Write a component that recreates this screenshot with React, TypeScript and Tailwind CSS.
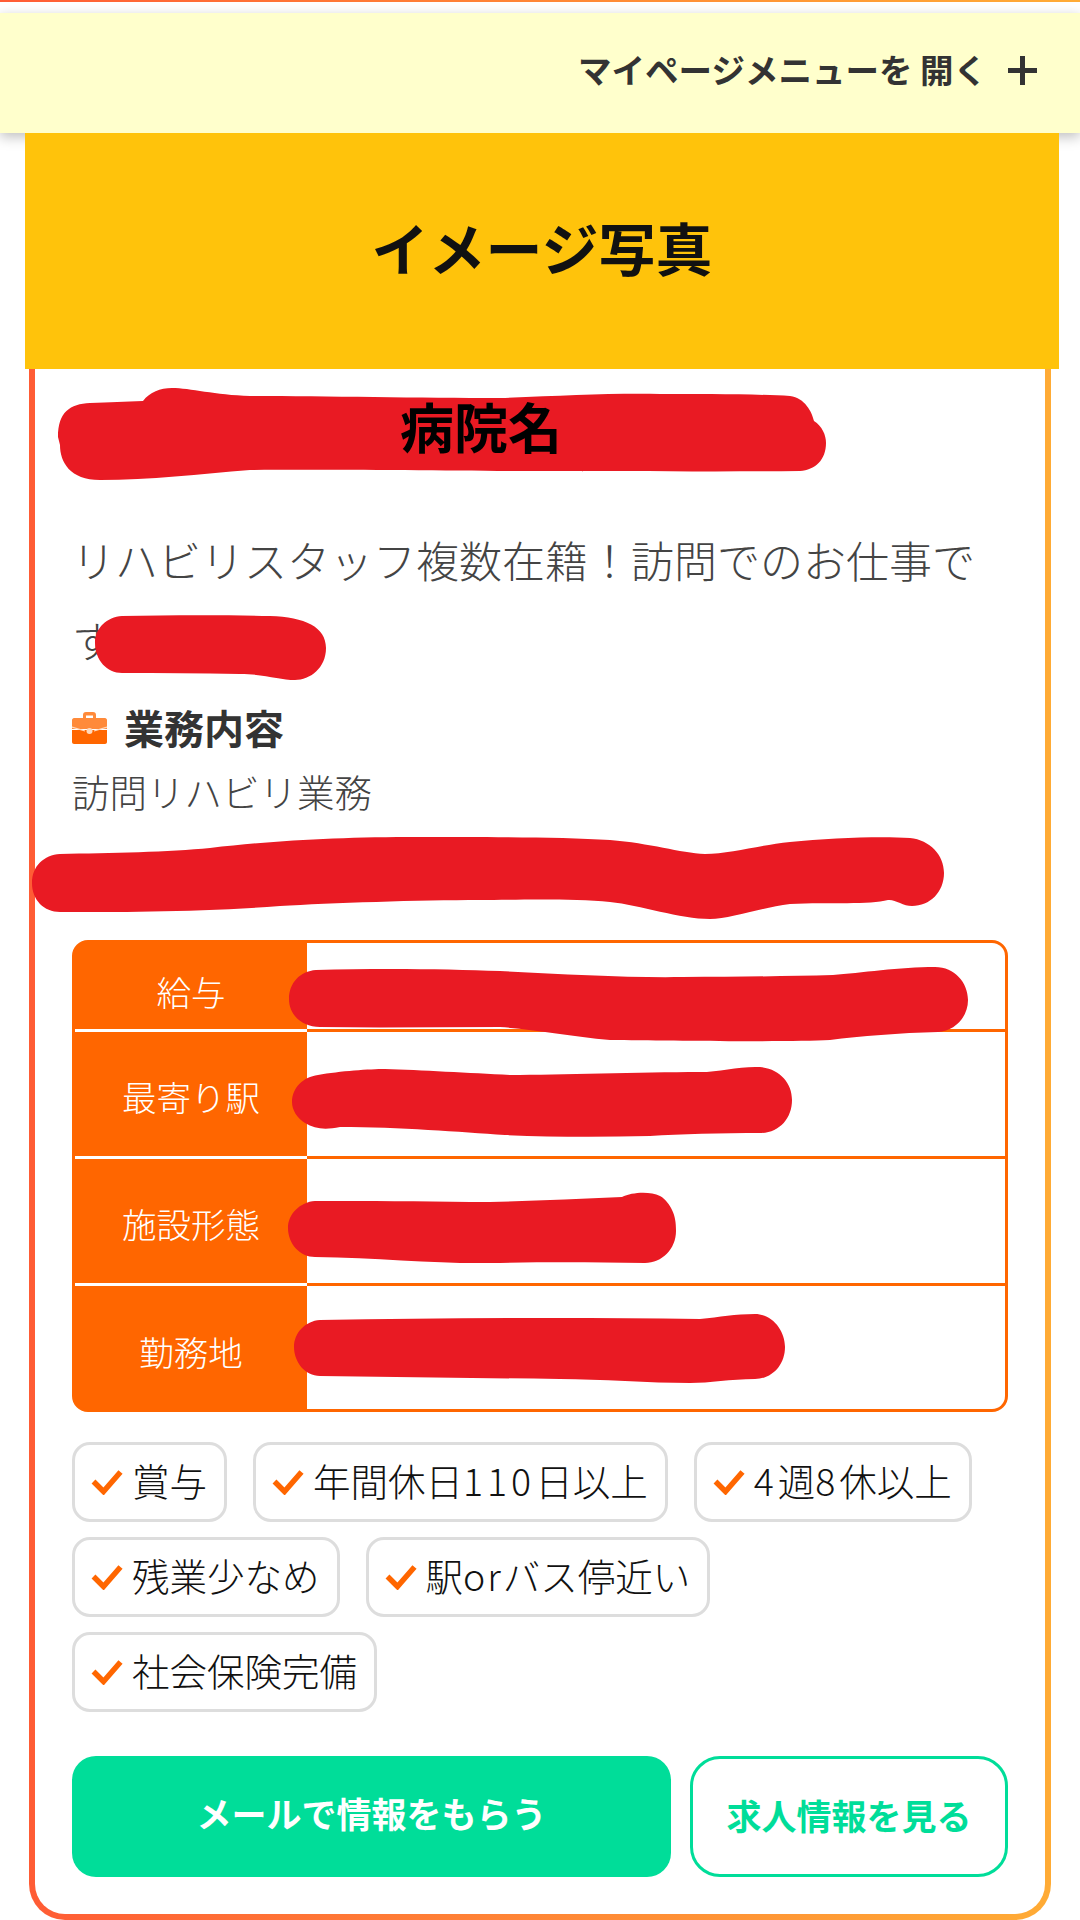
const font = { fontFamily: '"Noto Sans CJK JP", "Noto Sans", sans-serif' };

const rows = [
  { label: "給与", rowClass: "h-[89px]", cellClass: "pt-[11px] border-b-[3px] border-white", restClass: "border-b-[3px] border-[#ff6600]" },
  { label: "最寄り駅", rowClass: "h-[127px]", cellClass: "pt-[6px] border-b-[3px] border-white", restClass: "border-b-[3px] border-[#ff6600]" },
  { label: "施設形態", rowClass: "h-[127px]", cellClass: "pt-[5px] border-b-[3px] border-white", restClass: "border-b-[3px] border-[#ff6600]" },
  { label: "勤務地", rowClass: "h-[123px]", cellClass: "pt-[8px]", restClass: "" },
];

const tags = [
  <>賞与</>,
  <>年間休日<span className="tracking-[4px]">110</span>日以上</>,
  <><span className="tracking-[4px]">4</span>週<span className="tracking-[4px]">8</span>休以上</>,
  <>残業少なめ</>,
  <>駅<span className="tracking-[2px]">or</span>バス停近い</>,
  <>社会保険完備</>,
];

// redaction marks painted over the page
const scribbles = [
  "M58 437 C58 412 70 404 90 403 C110 402 125 402 143 401 C150 392 160 388 172 388 C190 388 215 395 250 396 C320 396 420 398 500 398 C560 396 610 393 660 394 C700 394 760 394 790 396 C805 398 812 412 814 421 C822 426 826 435 826 443 C826 460 815 470 800 471 C720 472 620 471 540 471 C460 471 320 469 250 470 C200 474 150 480 100 480 C70 480 60 462 60 445 Z",
  "M95 643 C95 628 107 617 122 616 C170 615 230 615 270 616 C305 617 326 627 326 648 C326 668 310 680 295 680 C280 680 265 674 240 674 C200 673 160 673 122 673 C107 673 95 660 95 643 Z",
  "M32 883 C32 866 44 855 60 854 C110 853 170 852 210 848 C280 840 340 837 420 837 C480 837 560 837 610 840 C650 843 680 853 705 854 C730 854 760 845 790 842 C830 838 880 836 910 838 C930 840 944 855 944 873 C944 892 930 906 912 906 C903 906 895 899 888 900 C870 905 830 902 790 904 C760 908 730 919 710 919 C680 919 640 905 610 902 C570 898 510 900 480 900 C420 900 330 903 280 906 C200 912 120 912 60 912 C44 912 32 900 32 883 Z",
  "M289 999 C289 983 300 971 316 970 C380 968 450 969 500 971 C560 974 630 978 683 977 C740 977 790 976 833 975 C860 973 900 967 935 967 C955 967 968 983 968 1000 C968 1017 955 1031 938 1032 C900 1033 860 1036 830 1040 C790 1042 670 1041 610 1040 C570 1036 530 1029 500 1027 C440 1027 380 1028 320 1027 C302 1027 289 1015 289 999 Z",
  "M292 1102 C292 1088 303 1077 318 1075 C340 1071 370 1069 385 1069 C420 1070 470 1073 510 1075 C560 1075 640 1072 700 1072 C720 1072 740 1066 760 1067 C780 1069 792 1083 792 1100 C792 1118 780 1132 762 1133 C720 1133 680 1134 650 1136 C600 1137 550 1137 505 1135 C460 1132 400 1127 340 1127 C325 1130 315 1129 305 1123 C297 1118 292 1110 292 1102 Z",
  "M288 1228 C288 1214 300 1202 315 1201 C370 1201 420 1201 470 1202 C520 1202 570 1199 622 1197 C632 1192 650 1191 660 1196 C666 1199 670 1206 672 1210 C675 1216 676 1222 676 1231 C676 1249 662 1263 645 1263 C590 1262 540 1262 490 1263 C440 1264 380 1258 315 1257 C300 1257 288 1244 288 1228 Z",
  "M294 1347 C294 1333 305 1321 320 1320 C440 1318 570 1317 700 1319 C720 1317 735 1314 755 1314 C772 1314 785 1330 785 1347 C785 1365 772 1379 755 1379 C730 1379 710 1383 690 1383 C650 1383 600 1379 560 1379 C480 1378 400 1377 320 1376 C305 1376 294 1362 294 1347 Z",
];

function Check() {
  return (
    <svg width="32" height="26" viewBox="0 0 32 26" className="shrink-0" aria-hidden>
      <path d="M2.5 12.5 L12.5 22.5 L29.5 3" fill="none" stroke="#ff6600" strokeWidth="5.5" />
    </svg>
  );
}

function Briefcase() {
  return (
    <svg width="35" height="33" viewBox="0 0 35 33" className="shrink-0" aria-hidden>
      <path d="M11 8 V4 C11 2 12 1 14 1 H21 C23 1 24 2 24 4 V8 H21 V4.5 H14 V8 Z" fill="#ff8a3a" />
      <path d="M2 7 H33 C34 7 35 8 35 9 V18 H0 V9 C0 8 1 7 2 7 Z" fill="#ff8a3a" />
      <path d="M0 19 H35 V31 C35 32 34 33 33 33 H2 C1 33 0 32 0 31 Z" fill="#ff6600" />
      <path d="M0 16 L13 20 M35 16 L22 20" stroke="#ffd9bd" strokeWidth="1.2" />
      <circle cx="17.5" cy="20" r="3" fill="#ffd9bd" />
    </svg>
  );
}

export default function App() {
  return (
    <div className="relative w-[1080px] h-[1920px] overflow-hidden bg-white" style={font}>
      <div className="h-[2px] bg-linear-to-r from-[#ff5c35] to-[#ffab35]" />

      <div className="relative z-10 mt-[11px] h-[120px] pb-[6px] bg-[#ffffcc] shadow-[0_4px_12px_rgba(0,0,0,0.25)] flex items-center justify-end pr-[43px] gap-[21px] text-[#333333]">
        <span className="text-[33.5px] font-bold whitespace-pre leading-none pb-[3px]">マイページメニューを 開く</span>
        <svg width="29" height="29" viewBox="0 0 29 29" aria-hidden>
          <path d="M0 14.5 H29 M14.5 0 V29" stroke="#333333" strokeWidth="5" />
        </svg>
      </div>

      <div className="relative z-20 ml-[25px] w-[1034px] h-[236px] bg-[#ffc30b] flex items-center justify-center pb-[8px] text-[57px] font-bold text-[#111111]">
        イメージ写真
      </div>

      <div className="ml-[29px] w-[1022px] h-[1551px] rounded-b-[36px] bg-linear-to-r from-[#ff5c35] to-[#ffab35] px-[6px] pb-[6px]">
        <div className="h-full rounded-b-[30px] bg-white px-[37px] pt-[26px]">
          <h2 className="relative z-40 ml-[328px] text-[54px] leading-[62px] font-bold text-black">病院名</h2>

          <p className="mt-[62px] text-[43px] leading-[80px] text-[#444444] font-light">
            リハビリスタッフ複数在籍！訪問でのお仕事です
          </p>

          <div className="mt-[24px] flex items-center gap-[17px] h-[48px]">
            <Briefcase />
            <span className="text-[40px] font-bold text-[#333333] leading-none">業務内容</span>
          </div>
          <p className="mt-[15px] text-[37.5px] leading-[50px] text-[#444444] font-light">訪問リハビリ業務</p>

          <div className="mt-[124px] border-[3px] border-[#ff6600] rounded-[16px] overflow-hidden bg-[#ff6600]">
            {rows.map((row) => (
              <div key={row.label} className={`flex ${row.rowClass}`}>
                <div className={`w-[232px] flex items-center justify-center bg-[#ff6600] text-white text-[34.5px] font-light ${row.cellClass}`}>
                  {row.label}
                </div>
                <div className={`flex-1 bg-white ${row.restClass}`} />
              </div>
            ))}
          </div>

          <div className="mt-[30px] flex flex-wrap gap-x-[26px] gap-y-[15px]">
            {tags.map((tag, i) => (
              <div
                key={i}
                className="h-[80px] flex items-center gap-[9px] pl-[16px] pr-[17px] border-[3px] border-[#dddddd] rounded-[18px] text-[37.5px] font-light text-[#111111] whitespace-nowrap"
              >
                <Check />
                <span className="pb-[3px]">{tag}</span>
              </div>
            ))}
          </div>

          <div className="mt-[44px] flex gap-[19px] h-[121px]">
            <div className="w-[599px] rounded-[24px] bg-[#00dd99] flex items-center justify-center pb-[7px] text-white text-[35px] font-bold">
              メールで情報をもらう
            </div>
            <div className="flex-1 rounded-[30px] border-[3px] border-[#00dd99] bg-white flex items-center justify-center pb-[2px] text-[#00dd99] text-[35px] font-bold">
              求人情報を見る
            </div>
          </div>
        </div>
      </div>

      <svg className="absolute inset-0 z-30 pointer-events-none" width="1080" height="1920" viewBox="0 0 1080 1920" aria-hidden>
        {scribbles.map((d) => (
          <path key={d} d={d} fill="#e91a23" />
        ))}
      </svg>
    </div>
  );
}
